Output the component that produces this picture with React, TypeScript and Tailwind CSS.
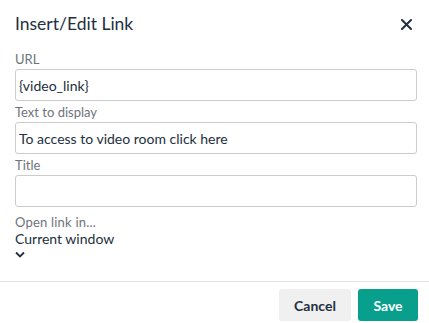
import React, { useState } from 'react';

// حقل نصي مع عنوان
const Field: React.FC<{ label: string; value?: string }> = ({ label, value = '' }) => {
  const [text, setText] = useState(value);
  return (
    <div className="flex flex-col">
      <label className="text-[13px] leading-[16px] text-[#6d737b] mb-[2px]">{label}</label>
      <input
        className="h-[32px] w-full rounded-[3px] border border-[#cccccc] bg-white px-[3px] text-[14px] text-[#222f3e] outline-none"
        value={text}
        onChange={(e) => setText(e.target.value)}
      />
    </div>
  );
};

export default function App() {
  return (
    <div
      className="w-[429px] h-[323px] overflow-hidden bg-white flex flex-col"
      style={{ fontFamily: 'Lato, "Open Sans", sans-serif' }}
    >
      {/* رأس النافذة */}
      <div className="flex items-center justify-between px-[15px] h-[51px] pb-[3px]">
        <h1 className="text-[17.5px] text-[#222f3e] leading-none">Insert/Edit Link</h1>
        <button className="w-[24px] h-[24px] flex items-center justify-center text-[#222f3e] mr-[-4px]">
          <svg width="11" height="11" viewBox="0 0 11 11" fill="none" stroke="currentColor" strokeWidth={2} strokeLinecap="round">
            <path d="M1 1l9 9M10 1l-9 9" />
          </svg>
        </button>
      </div>

      {/* محتوى النموذج */}
      <div className="flex flex-col gap-[3px] pr-[12px] pl-[15px]">
        <Field label="URL" value="{video_link}" />
        <Field label="Text to display" value="To access to video room click here" />
        <Field label="Title" />
        <div className="mt-[4px] flex flex-col">
          <span className="text-[13px] leading-[17px] tracking-[0.2px] text-[#6d737b]">Open link in...</span>
          <span className="text-[14px] leading-[16px] text-[#222f3e]">Current window</span>
          <svg className="mt-[4px] text-[#222f3e]" width="10" height="7" viewBox="0 0 10 7" fill="none" stroke="currentColor" strokeWidth={1.8}>
            <path d="M1 1.5l4 4 4-4" />
          </svg>
        </div>
      </div>

      {/* أزرار الحفظ والإلغاء */}
      <div className="mt-auto border-t border-[#e3e3e3] flex justify-end gap-[7px] px-[11px] pt-[7px] pb-[2px]">
        <button className="h-[32px] w-[72px] rounded-[3px] bg-[#f0f0f0] text-[14px] font-bold text-[#222f3e]">Cancel</button>
        <button className="h-[32px] w-[60px] rounded-[3px] bg-[#08a08d] text-[14px] font-bold text-white">Save</button>
      </div>
    </div>
  );
}
